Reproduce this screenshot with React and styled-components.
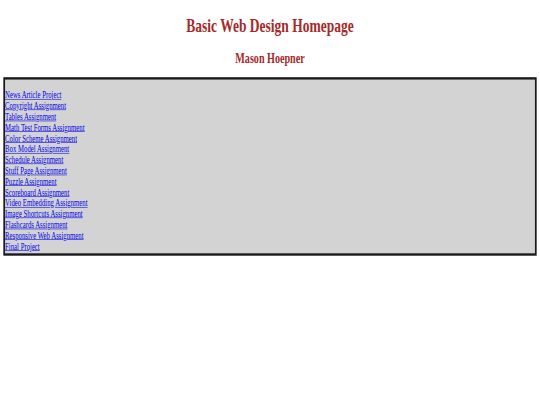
import React from "react";
import styled, { createGlobalStyle } from "styled-components";

const Global = createGlobalStyle`
  html, body {
    margin: 0;
    padding: 0;
    background: #ffffff;
    overflow: hidden;
  }
  body {
    font-family: "Liberation Serif", "Times New Roman", serif;
  }
`;

const Frame = styled.div`
  width: 540px;
  height: 405px;
  overflow: hidden;
`;

/* The reference was captured from a 1280px wide page and scaled into 540x405. */
const Viewport = styled.div`
  width: 1280px;
  height: 690px;
  transform: scale(0.421875, 0.587);
  transform-origin: 0 0;
  padding: 0 8px;
  box-sizing: border-box;
  font-family: "Liberation Serif", "Times New Roman", serif;
  font-size: 16px;
  color: #000;
`;

const Title = styled.h1`
  margin: 14.5px 0 24px;
  font-size: 32px;
  font-weight: bold;
  text-align: center;
  color: #a52a2a;
`;

const Author = styled.h2`
  margin: 19.92px 0 18px;
  font-size: 24px;
  font-weight: bold;
  text-align: center;
  color: #a52a2a;
`;

const LinkBox = styled.nav`
  display: flex;
  flex-direction: column;
  align-items: flex-start;
  background: #d3d3d3;
  border: 4px solid #1a1a1a;
  padding: 18px 0 2px 0;
`;

const ProjectLink = styled.a`
  color: #0000ee;
  text-decoration: underline;
  font-size: 16px;
  line-height: 18.4px;
`;

const projects = [
  "News Article Project",
  "Copyright Assignment",
  "Tables Assignment",
  "Math Test Forms Assignment",
  "Color Scheme Assignment",
  "Box Model Assignment",
  "Schedule Assignment",
  "Stuff Page Assignment",
  "Puzzle Assignment",
  "Scoreboard Assignment",
  "Video Embedding Assignment",
  "Image Shortcuts Assignment",
  "Flashcards Assignment",
  "Responsive Web Assignment",
  "Final Project",
];

export default function App() {
  return (
    <>
      <Global />
      <Frame>
        <Viewport>
          <Title>Basic Web Design Homepage</Title>
          <Author>Mason Hoepner</Author>
          <LinkBox>
            {projects.map((p) => (
              <ProjectLink key={p} href="#">
                {p}
              </ProjectLink>
            ))}
          </LinkBox>
        </Viewport>
      </Frame>
    </>
  );
}
